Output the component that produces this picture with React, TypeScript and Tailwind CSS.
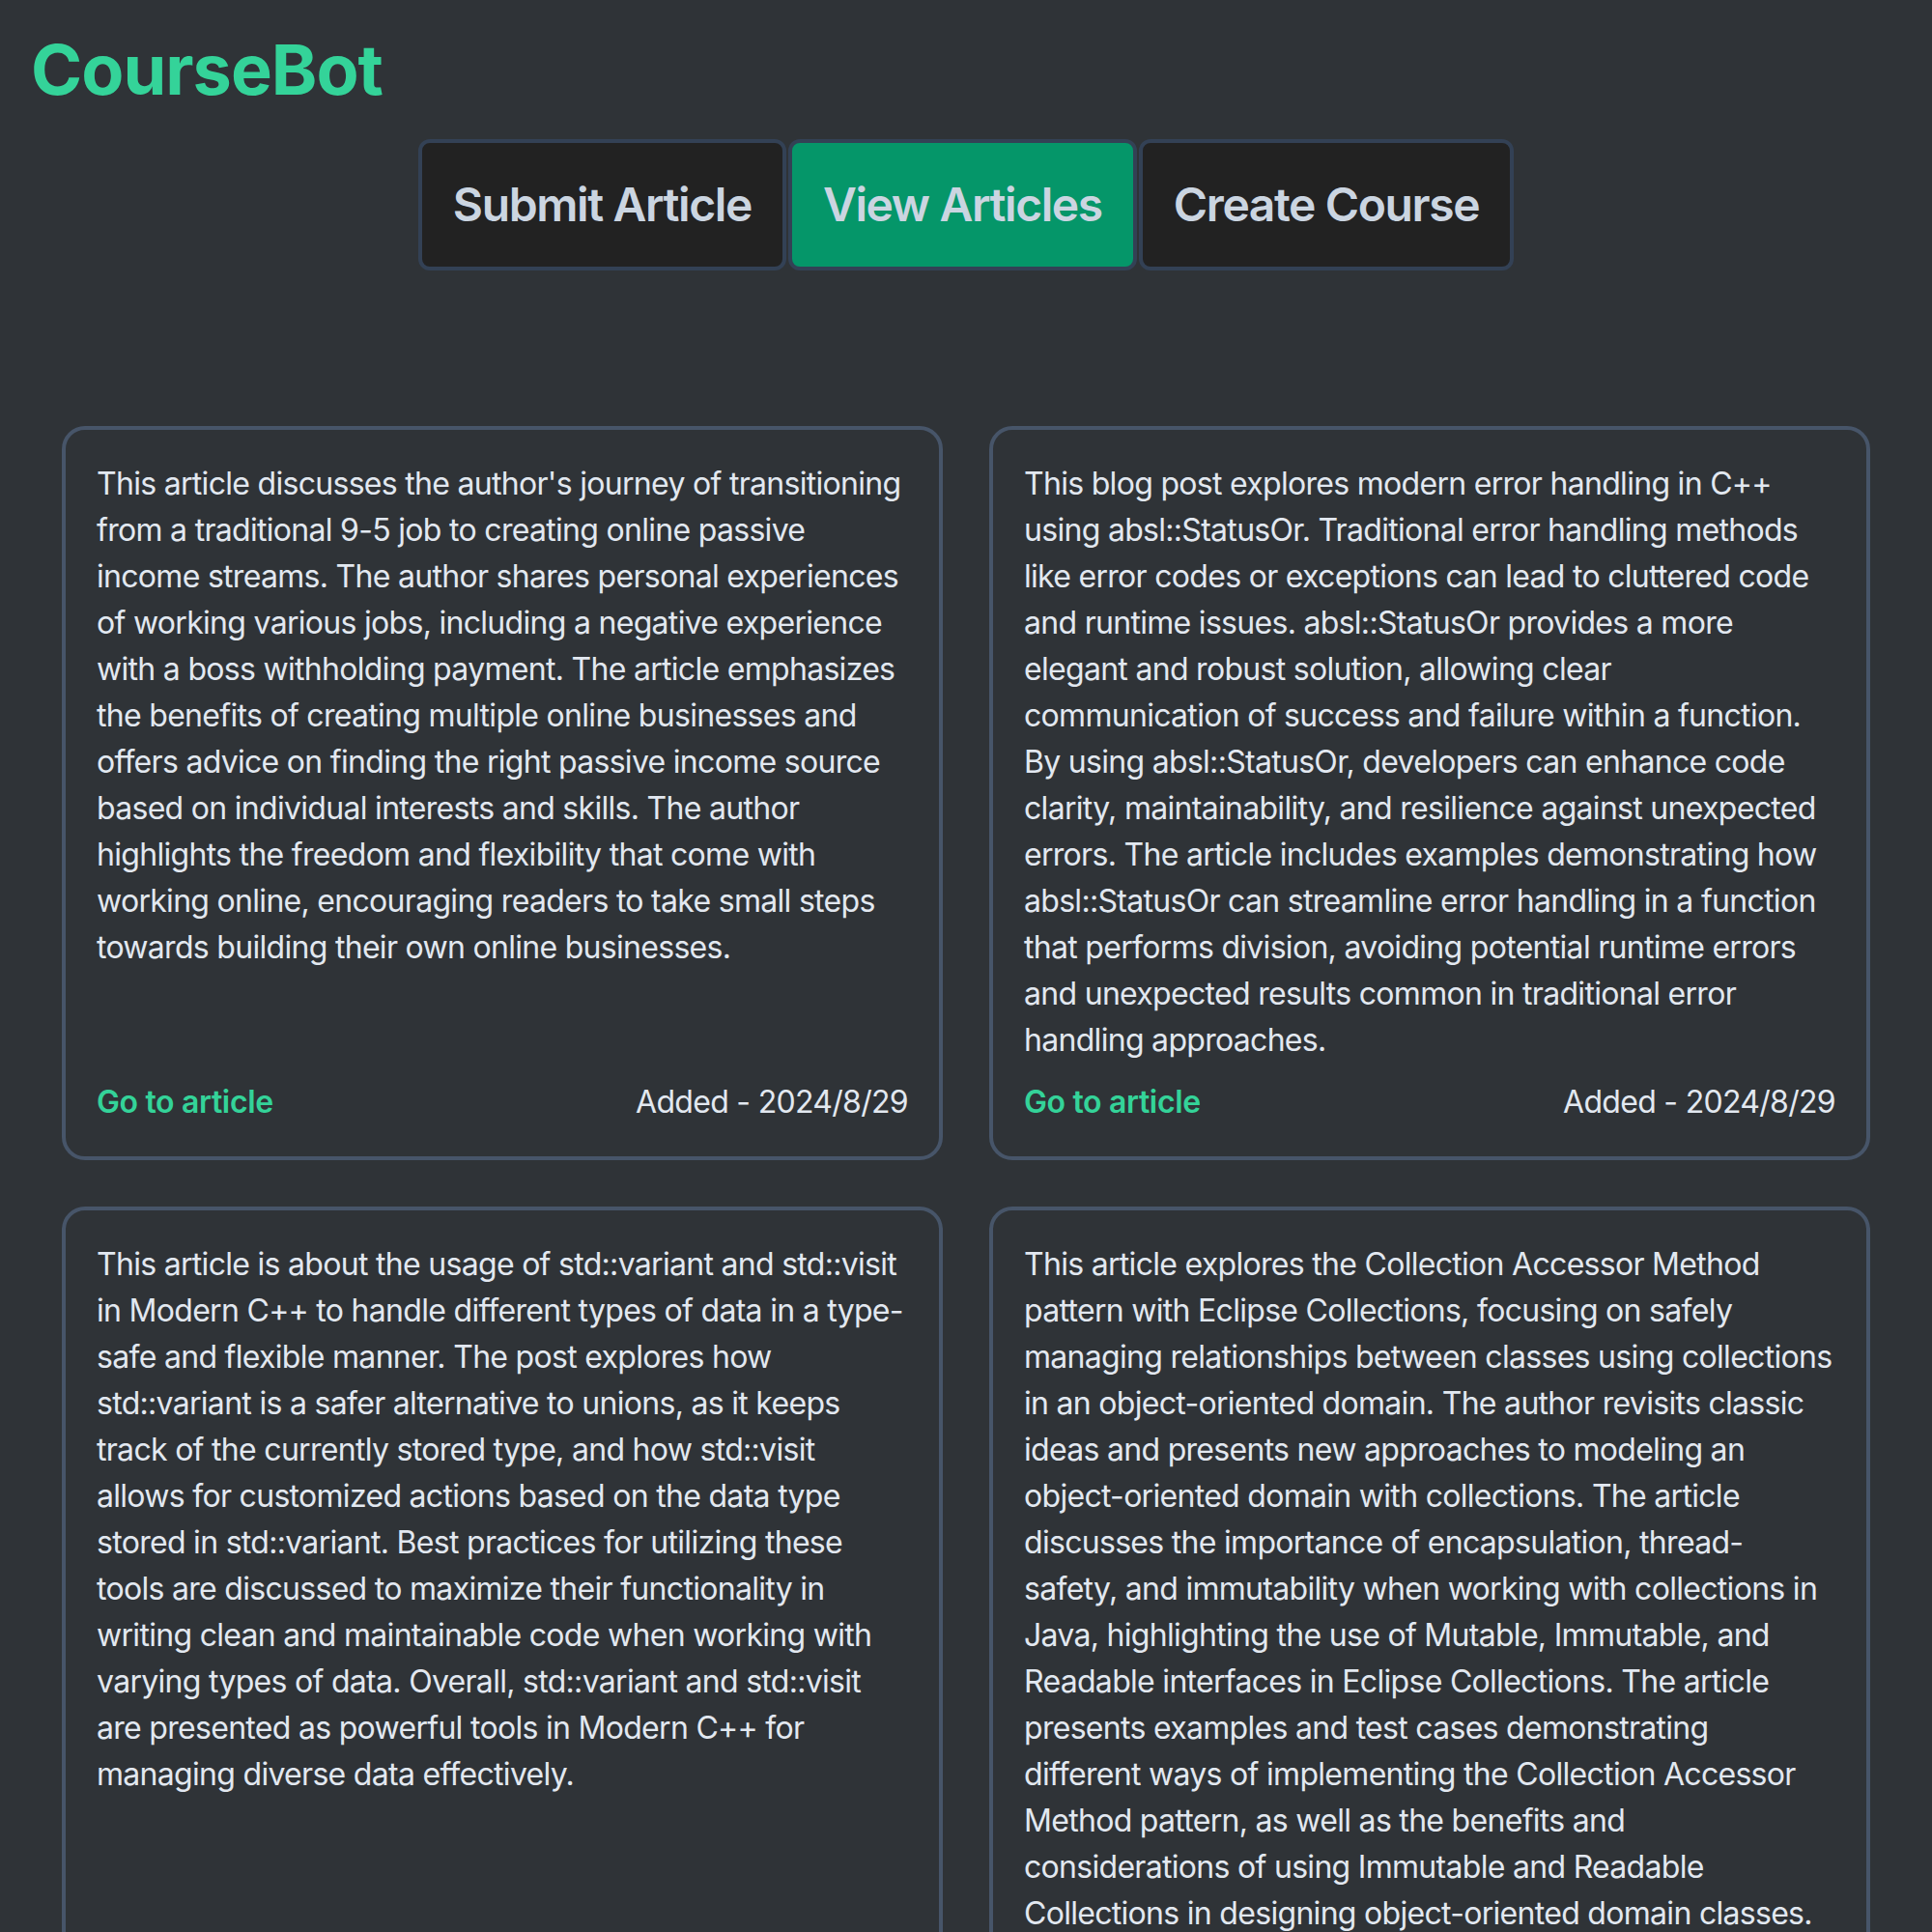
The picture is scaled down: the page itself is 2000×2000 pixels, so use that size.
import { useState } from "react";

type Article = {
  id: number;
  summary: string;
  url: string;
  added: string;
};

const ARTICLES: Article[] = [
  {
    id: 1,
    summary:
      "This article discusses the author's journey of transitioning from a traditional 9-5 job to creating online passive income streams. The author shares personal experiences of working various jobs, including a negative experience with a boss withholding payment. The article emphasizes the benefits of creating multiple online businesses and offers advice on finding the right passive income source based on individual interests and skills. The author highlights the freedom and flexibility that come with working online, encouraging readers to take small steps towards building their own online businesses.",
    url: "#",
    added: "2024/8/29",
  },
  {
    id: 2,
    summary:
      "This blog post explores modern error handling in C++ using absl::StatusOr. Traditional error handling methods like error codes or exceptions can lead to cluttered code and runtime issues. absl::StatusOr provides a more elegant and robust solution, allowing clear communication of success and failure within a function. By using absl::StatusOr, developers can enhance code clarity, maintainability, and resilience against unexpected errors. The article includes examples demonstrating how absl::StatusOr can streamline error handling in a function that performs division, avoiding potential runtime errors and unexpected results common in traditional error handling approaches.",
    url: "#",
    added: "2024/8/29",
  },
  {
    id: 3,
    summary:
      "This article is about the usage of std::variant and std::visit in Modern C++ to handle different types of data in a type-safe and flexible manner. The post explores how std::variant is a safer alternative to unions, as it keeps track of the currently stored type, and how std::visit allows for customized actions based on the data type stored in std::variant. Best practices for utilizing these tools are discussed to maximize their functionality in writing clean and maintainable code when working with varying types of data. Overall, std::variant and std::visit are presented as powerful tools in Modern C++ for managing diverse data effectively.",
    url: "#",
    added: "2024/8/29",
  },
  {
    id: 4,
    summary:
      "This article explores the Collection Accessor Method pattern with Eclipse Collections, focusing on safely managing relationships between classes using collections in an object-oriented domain. The author revisits classic ideas and presents new approaches to modeling an object-oriented domain with collections. The article discusses the importance of encapsulation, thread-safety, and immutability when working with collections in Java, highlighting the use of Mutable, Immutable, and Readable interfaces in Eclipse Collections. The article presents examples and test cases demonstrating different ways of implementing the Collection Accessor Method pattern, as well as the benefits and considerations of using Immutable and Readable Collections in designing object-oriented domain classes.",
    url: "#",
    added: "2024/8/29",
  },
];

const TABS = [
  { key: "submit" as const, label: "Submit Article" },
  { key: "view" as const, label: "View Articles" },
  { key: "course" as const, label: "Create Course" },
];

function ArticleCard({ article }: { article: Article }) {
  return (
    <div className="flex flex-col justify-between rounded-[24px] border-4 border-[#475569] py-8 pl-8 pr-[35px] tracking-[-0.7px]">
      <p className="text-[32px] leading-[48px] text-[#e2e8f0]">{article.summary}</p>
      <div className="mt-4 -mr-[3px] flex items-center justify-between text-[32px] leading-[48px]">
        <a href={article.url} className="font-semibold tracking-[-0.35px] text-[#34d399]">
          Go to article
        </a>
        <span className="text-[#e2e8f0]">Added - {article.added}</span>
      </div>
    </div>
  );
}

export default function App() {
  const [tab, setTab] = useState<"submit" | "view" | "course">("view");

  return (
    <div className="min-h-screen bg-[#2f3337] p-8 font-['Inter',sans-serif]">
      <h1 className="text-[72px] leading-[80px] font-bold tracking-[-1px] text-[#34d399]">CourseBot</h1>

      <nav className="mt-8 flex justify-center gap-[2px]">
        {TABS.map((t) => {
          const active = tab === t.key;
          return (
            <button
              key={t.key}
              onClick={() => setTab(t.key)}
              className={`rounded-[12px] border-4 border-[#334155] px-8 py-8 text-[48px] leading-[64px] font-semibold tracking-[-1.4px] text-[#cbd5e1] ${
                active ? "bg-[#059669]" : "bg-[#222222]"
              }`}
            >
              {t.label}
            </button>
          );
        })}
      </nav>

      {/* articles list */}
      <div className="mt-[161px] grid grid-cols-2 gap-12 px-8">
        {ARTICLES.map((a) => (
          <ArticleCard key={a.id} article={a} />
        ))}
      </div>
    </div>
  );
}
